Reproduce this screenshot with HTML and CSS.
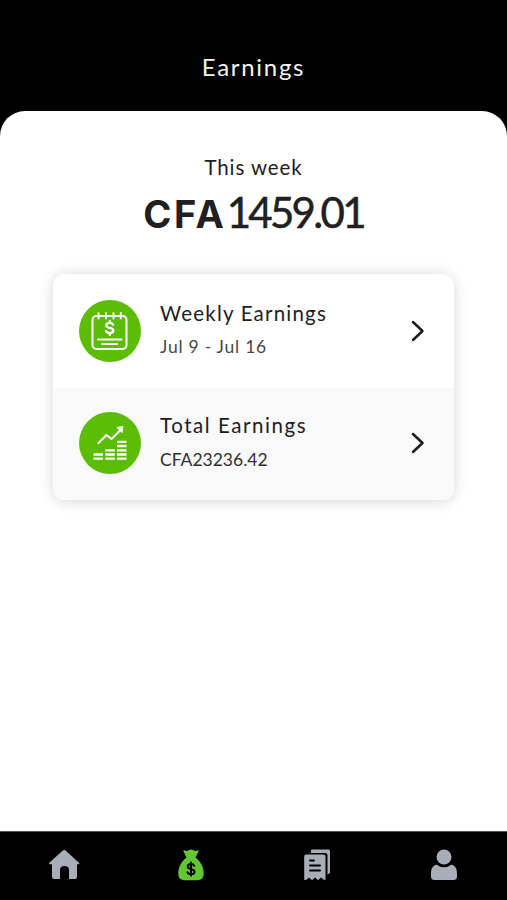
FILE: index.html
```html
<!DOCTYPE html>
<html lang="en">
<head>
  <meta charset="UTF-8">
  <meta name="viewport" content="width=device-width, initial-scale=1.0">
  <title>Earnings</title>
  <link rel="stylesheet" href="styles.css">
</head>
<body>
  <header class="header">
    <h1>Earnings</h1>
  </header>

  <main class="content">
    <div class="period">This week</div>
    <div class="amount"><span class="currency">CFA</span><span class="value">1459.01</span></div>

    <div class="card">
      <a class="row" href="#">
        <svg class="row-icon" viewBox="0 0 62 62">
          <circle cx="31" cy="31" r="31" fill="#5bbd05"/>
          <g fill="none" stroke="#fff" stroke-width="2" stroke-linecap="round" stroke-linejoin="round">
            <path d="M18 16h-.5a4 4 0 0 0-4 4v25a4 4 0 0 0 4 4h26a4 4 0 0 0 4-4v-25a4 4 0 0 0-4-4H43"/>
            <path d="M20 16h21"/>
            <path d="M19.500 13v5.500M27 13v5.500M34.500 13v5.500M41.800 13v5.500"/>
            <path stroke-width="2.300" d="M34 24.700c-.5-1.300-1.700-1.800-3.300-1.800-2 0-3.400 1-3.400 2.500 0 3.600 7 1.600 7 5.100 0 1.700-1.500 2.600-3.600 2.600-1.900 0-3.200-.8-3.700-2.200M30.800 21v1.900M30.800 33v2"/>
            <path d="M19 39.500h23.500M23 44h15"/>
          </g>
        </svg>
        <div class="row-text">
          <div class="row-title">Weekly Earnings</div>
          <div class="row-sub dates">Jul 9 - Jul 16</div>
        </div>
        <svg class="chevron" viewBox="0 0 14 22"><path d="M2 2l9.500 9L2 20"/></svg>
      </a>
      <a class="row total" href="#">
        <svg class="row-icon" viewBox="0 0 62 62">
          <circle cx="31" cy="31" r="31" fill="#5bbd05"/>
          <path d="M19.500 31l8-8 5 4L42 17.500" fill="none" stroke="#fff" stroke-width="2" stroke-linecap="round" stroke-linejoin="round"/>
          <path d="M38 15.500l6-1-1 6z" fill="#fff" stroke="#fff" stroke-linejoin="round"/>
          <path d="M14.500 42.500h9.500M14.500 46.700h9.500M26.300 38.300h9.500M26.300 42.500h9.500M26.300 46.700h9.500M38 29.800h9.500M38 34h9.500M38 38.300h9.500M38 42.500h9.500M38 46.700h9.500" stroke="#fff" stroke-width="2.300"/>
        </svg>
        <div class="row-text">
          <div class="row-title">Total Earnings</div>
          <div class="row-sub">CFA23236.42</div>
        </div>
        <svg class="chevron" viewBox="0 0 14 22"><path d="M2 2l9.500 9L2 20"/></svg>
      </a>
    </div>
  </main>

  <nav class="tabs">
    <a class="tab" href="#">
      <svg viewBox="0 0 32 32">
        <path d="M14.800 1.600a2 2 0 0 1 2.800 0L31 13.800q1 1.500-1 1.500h-1V28q0 2-2 2h-6v-9q0-4-4.500-4t-4.500 4v9H6q-2 0-2-2V15.300H2.300q-2 0-1-1.500z"/>
      </svg>
    </a>
    <a class="tab active" href="#">
      <svg viewBox="0 0 32 32">
        <path d="M9.500 1.200q2 1.500 4 0 2.500-1.300 5 0 2.300 1.500 4 0 1.700-.3 1 1.300L20.500 8.500c5 4 8.200 9.500 8.200 15.500 0 5.500-2.500 7.200-6.500 7.200H9.800c-4 0-6.500-1.700-6.500-7.200 0-6 3.200-11.500 8.200-15.500L8.500 2.500q-.5-1.500 1-1.300z"/>
        <path class="cut" d="M19.200 16.800c-.5-1.300-1.700-1.700-3.200-1.700-2 0-3.300 1-3.300 2.500 0 3.600 6.800 1.500 6.800 5.100 0 1.600-1.500 2.600-3.500 2.600s-3.200-.8-3.600-2.200M16 13.500v13.300"/>
      </svg>
    </a>
    <a class="tab" href="#">
      <svg viewBox="0 0 32 32">
        <path d="M10 1.300q0-.8 1-.8h16.500q1.500 0 1.500 1.500v22l-2.500 1.500V6.500q0-2.500-2.500-2.500H10z"/>
        <path d="M5 5.500h17.500q2 0 2 2V31l-2-.5-2.500-2-3 2.800-3-2.800-3 2.800-3-2.800-2.500 2.300-2.300.2V7.500q0-2 1.800-2z"/>
        <path class="cut" d="M9 11.500h4M9 16.500h10M9 21.500h10"/>
      </svg>
    </a>
    <a class="tab" href="#">
      <svg viewBox="0 0 32 32">
        <circle cx="16" cy="8" r="7.500"/>
        <path d="M8.200 15.500Q16 21 23.800 15.500c3.800 1.500 5.200 4.500 5.200 9v3q0 3.500-3.500 3.500h-19Q3 31 3 27.500v-3c0-4.500 1.400-7.500 5.200-9z"/>
      </svg>
    </a>
  </nav>
</body>
</html>
```

FILE: styles.css
```css
* {
  box-sizing: border-box;
}
body {
  margin: 0;
  height: 100vh;
  display: flex;
  flex-direction: column;
  background: #000;
  color: #202020;
  font-family: Lato, sans-serif;
  overflow: hidden;
}
a {
  color: inherit;
  text-decoration: none;
}
.header {
  height: 111px;
  padding-top: 52px;
  text-align: center;
  color: #f4f4f4;
}
.header h1 {
  margin: 0;
  font-size: 24px;
  font-weight: 400;
  line-height: 30px;
  letter-spacing: 1.700px;
}
.content {
  flex: 1;
  background: #fff;
  border-radius: 25px 25px 0 0;
  padding: 42px 53px 0;
}
.period {
  font-size: 20.500px;
  line-height: 28px;
  letter-spacing: 0.9px;
  text-align: center;
}
.amount {
  display: flex;
  justify-content: center;
  align-items: baseline;
  height: 60px;
  padding-top: 1px;
  line-height: 60px;
  white-space: nowrap;
}
.currency {
  font-family: Inter, sans-serif;
  font-size: 38px;
  font-weight: 700;
  letter-spacing: 2.700px;
}
.value {
  font-size: 42px;
  letter-spacing: -2.700px;
  -webkit-text-stroke: 0.5px #202020;
}
.card {
  margin-top: 33px;
  border-radius: 12px;
  overflow: hidden;
  box-shadow: 0 1px 14px rgba(0, 0, 0, 0.17);
}
.row {
  display: flex;
  align-items: center;
  height: 114px;
  padding: 0 29px 1px 26px;
  background: #fff;
}
.row.total {
  height: 112px;
  padding-bottom: 2px;
  background: #f9f9f9;
}
.row-icon {
  width: 62px;
  height: 62px;
  flex-shrink: 0;
}
.row-text {
  flex: 1;
  margin-left: 19px;
  white-space: nowrap;
}
.row-title {
  margin: -2px 0 2px;
  font-size: 20.500px;
  line-height: 32px;
  letter-spacing: 1.200px;
}
.row.total .row-title {
  margin-bottom: 3px;
  letter-spacing: 1.550px;
}
.row-sub {
  font-size: 17.500px;
  line-height: 32px;
  color: #303030;
}
.row-sub.dates {
  color: #484848;
  letter-spacing: 0.750px;
}
.chevron {
  width: 14px;
  height: 22px;
  fill: none;
  stroke: #1c1c1c;
  stroke-width: 2.5;
  stroke-linecap: round;
  stroke-linejoin: round;
}
.tabs {
  display: flex;
  height: 69px;
  border-top: 1px solid #555;
  padding: 17px 0 0 1px;
  background: #000;
}
.tab {
  flex: 1;
  display: flex;
  justify-content: center;
  align-items: flex-start;
}
.tab svg {
  width: 32px;
  height: 32px;
  fill: #a8adb7;
}
.tab .cut {
  fill: none;
  stroke: #000;
  stroke-width: 2;
  stroke-linecap: round;
}
.tab.active svg {
  fill: #65c633;
}
```
